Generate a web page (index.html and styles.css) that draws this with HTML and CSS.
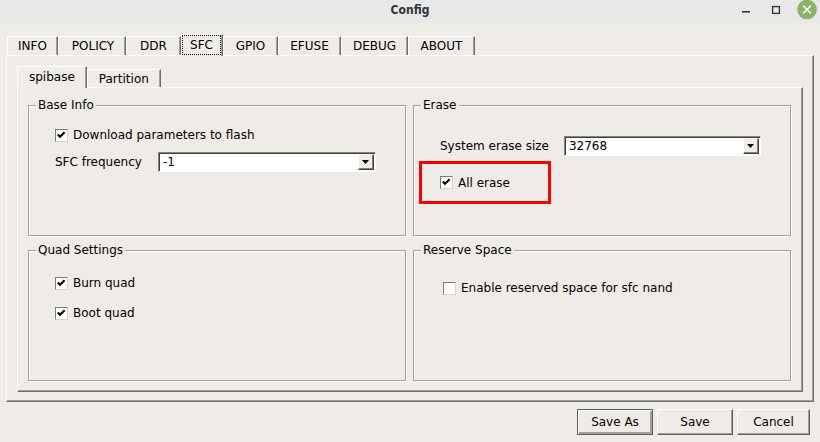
FILE: index.html
```html
<!DOCTYPE html>
<html lang="en">
<head>
<meta charset="utf-8">
<title>Config</title>
<link rel="stylesheet" href="styles.css">
</head>
<body>
<div class="window">
  <header class="titlebar">
    <span class="title">Config</span>
    <svg class="wm" width="78" height="23" viewBox="0 0 78 23" aria-hidden="true">
      <rect x="0" y="11" width="8" height="1.5" fill="#2e2e2e"/>
      <rect x="30.6" y="6.6" width="6.8" height="6.8" fill="none" stroke="#2e2e2e" stroke-width="1.3"/>
      <circle cx="65" cy="9.5" r="9.8" fill="#8cb369"/>
      <path d="M61.3 5.8 L68.7 13.2 M68.7 5.8 L61.3 13.2" stroke="#fff" stroke-width="1.4" fill="none"/>
    </svg>
  </header>

  <main class="content">
    <div class="tabs outer">
      <div class="tabbar">
        <span class="tab t-info">INFO</span>
        <span class="tab t-policy">POLICY</span>
        <span class="tab t-ddr">DDR</span>
        <span class="tab sel t-sfc"><span class="focus">SFC</span></span>
        <span class="tab t-gpio">GPIO</span>
        <span class="tab t-efuse">EFUSE</span>
        <span class="tab t-debug">DEBUG</span>
        <span class="tab t-about">ABOUT</span>
      </div>
      <div class="pane outer-pane">
        <div class="tabs inner">
          <div class="tabbar">
            <span class="tab sel">spibase</span>
            <span class="tab">Partition</span>
          </div>
          <div class="pane inner-pane">
            <div class="groups">
              <fieldset class="group">
                <legend>Base Info</legend>
                <div class="gbody base">
                  <label class="row check">
                    <span class="cb on"><svg width="11" height="11" viewBox="0 0 11 11"><polyline points="1.8,4.6 4,6.8 8.6,2.2" fill="none" stroke="#000" stroke-width="2.1"/></svg></span>
                    <span>Download parameters to flash</span>
                  </label>
                  <div class="row field">
                    <span>SFC frequency</span>
                    <div class="combo combo-freq"><span class="val">-1</span><span class="drop"><svg width="7" height="4" viewBox="0 0 7 4"><polygon points="0,0 7,0 3.5,4" fill="#000"/></svg></span></div>
                  </div>
                </div>
              </fieldset>

              <fieldset class="group">
                <legend>Erase</legend>
                <div class="gbody erase">
                  <div class="row field indent">
                    <span>System erase size</span>
                    <div class="combo combo-size"><span class="val">32768</span><span class="drop"><svg width="7" height="4" viewBox="0 0 7 4"><polygon points="0,0 7,0 3.5,4" fill="#000"/></svg></span></div>
                  </div>
                  <div class="highlight">
                    <label class="row check">
                      <span class="cb on"><svg width="11" height="11" viewBox="0 0 11 11"><polyline points="1.8,4.6 4,6.8 8.6,2.2" fill="none" stroke="#000" stroke-width="2.1"/></svg></span>
                      <span>All erase</span>
                    </label>
                  </div>
                </div>
              </fieldset>

              <fieldset class="group">
                <legend>Quad Settings</legend>
                <div class="gbody quad">
                  <label class="row check">
                    <span class="cb on"><svg width="11" height="11" viewBox="0 0 11 11"><polyline points="1.8,4.6 4,6.8 8.6,2.2" fill="none" stroke="#000" stroke-width="2.1"/></svg></span>
                    <span>Burn quad</span>
                  </label>
                  <label class="row check">
                    <span class="cb on"><svg width="11" height="11" viewBox="0 0 11 11"><polyline points="1.8,4.6 4,6.8 8.6,2.2" fill="none" stroke="#000" stroke-width="2.1"/></svg></span>
                    <span>Boot quad</span>
                  </label>
                </div>
              </fieldset>

              <fieldset class="group">
                <legend>Reserve Space</legend>
                <div class="gbody reserve">
                  <label class="row check">
                    <span class="cb"></span>
                    <span>Enable reserved space for sfc nand</span>
                  </label>
                </div>
              </fieldset>
            </div>
          </div>
        </div>
      </div>
    </div>

    <div class="buttons">
      <button class="btn default save-as">Save As</button>
      <button class="btn save">Save</button>
      <button class="btn cancel">Cancel</button>
    </div>
  </main>
</div>
</body>
</html>
```

FILE: styles.css
```css
* { box-sizing: border-box; }

html, body {
  margin: 0;
  padding: 0;
}

body {
  width: 820px;
  height: 442px;
  overflow: hidden;
  background: #efebe7;
  color: #000;
  font-family: "DejaVu Sans", "Liberation Sans", sans-serif;
  font-size: 12px;
  line-height: 1;
}

.window {
  display: flex;
  flex-direction: column;
  height: 442px;
}

/* ---------- title bar ---------- */
.titlebar {
  height: 23px;
  flex: none;
  background: #e8e8e8;
  display: grid;
  grid-template-columns: 1fr auto 1fr;
  align-items: center;
}

.title {
  grid-column: 2;
  font-family: "DejaVu Sans Condensed", "DejaVu Sans", sans-serif;
  font-stretch: condensed;
  font-weight: bold;
  font-size: 12px;
  color: #2e3436;
  padding-bottom: 3px;
}

.wm {
  grid-column: 3;
  justify-self: end;
  display: block;
}

/* ---------- content ---------- */
.content {
  flex: 1;
  display: flex;
  flex-direction: column;
  padding: 11px 6px 0 6px;
}

.tabs {
  display: flex;
  flex-direction: column;
}

.tabs.outer {
  height: 368px;
  flex: none;
}

.tabs.inner {
  flex: 1;
}

.tabbar {
  display: flex;
  align-items: flex-end;
  height: 21px;
  flex: none;
  position: relative;
  z-index: 1;
}

.outer > .tabbar {
  padding-left: 1px;
}

.tab {
  height: 19px;
  padding: 0 11px;
  display: flex;
  align-items: center;
  justify-content: center;
  white-space: nowrap;
  background: #efebe7;
  border-top: 1px solid #fff;
  border-left: 1px solid #fff;
  border-right: 1px solid #6f6f6f;
  box-shadow: inset -1px 0 0 #a0a0a0;
}

/* tab widths as laid out by the toolkit */
.t-info   { width: 51px; padding: 0; }
.t-policy { width: 68px; padding: 0 0 0 2px; }
.t-ddr    { width: 55px; padding: 0; }
.t-sfc    { width: 42px; }
.t-gpio   { width: 55px; padding: 0; }
.t-efuse  { width: 63px; padding: 0; }
.t-debug  { width: 67px; padding: 0; }
.t-about  { width: 67px; padding: 0; }

.inner .tab {
  height: 18px;
}

.tab.sel,
.inner .tab.sel {
  height: 22px;
  margin-bottom: -1px;
  padding-bottom: 1px;
}

.outer > .tabbar > .tab.sel {
  padding: 0 1px 1px 0;
  align-items: flex-start;
}

.focus {
  display: flex;
  align-items: center;
  justify-content: center;
  width: 40px;
  height: 20px;
  border: 1px dotted #000;
}

.pane {
  flex: 1;
  display: flex;
  flex-direction: column;
  background: #efebe7;
  border-top: 1px solid #fff;
  border-left: 1px solid #fff;
  border-right: 1px solid #6f6f6f;
  border-bottom: 1px solid #6f6f6f;
  box-shadow: inset -1px -1px 0 #a0a0a0;
}

.outer-pane {
  padding: 10px 10px 9px 10px;
}

/* ---------- group boxes ---------- */
.groups {
  flex: 1;
  display: grid;
  grid-template-columns: 1fr 1fr;
  grid-template-rows: 1fr 1fr;
  gap: 6px 7px;
  padding: 9px 11px 10px 10px;
}

.group {
  margin: 0;
  padding: 0;
  min-width: 0;
  border: 1px solid #a0a0a0;
  box-shadow: 1px 1px 0 #fff, inset 1px 1px 0 #fff;
}

.group legend {
  margin-left: 7px;
  padding: 0 2px;
  line-height: 16px;
  background: #efebe7;
}

.gbody {
  display: flex;
  flex-direction: column;
}

.gbody.base { padding: 12px 0 0 26px; gap: 7px; }
.gbody.erase { padding: 23px 0 0 5px; gap: 5px; }
.gbody.quad { padding: 15px 0 0 26px; gap: 10px; }
.gbody.reserve { padding: 20px 0 0 29px; }

.row {
  display: flex;
  align-items: center;
  height: 20px;
  white-space: nowrap;
}

.check { gap: 5px; }
.field { gap: 15px; }
.indent { margin-left: 21px; }

.cb {
  width: 13px;
  height: 13px;
  flex: none;
  background: #fff;
  border: 1px solid;
  border-color: #7c7c7c #d4d4d4 #d4d4d4 #7c7c7c;
  display: flex;
}

.cb svg { display: block; }

.highlight {
  width: 132px;
  height: 43px;
  border: 3px solid #ff0000;
  padding-left: 18px;
  display: flex;
  align-items: center;
}

/* ---------- combo box ---------- */
.combo {
  height: 20px;
  display: flex;
  align-items: center;
  background: #fff;
  border: 1px solid;
  border-color: #848484 #fff #fff #848484;
  box-shadow: inset 1px 1px 0 #404040;
  padding: 1px 1px 1px 4px;
}

.combo-freq { width: 218px; margin-left: 1px; }
.combo-size { width: 197px; }

.val { flex: 1; }

.drop {
  width: 16px;
  height: 16px;
  flex: none;
  display: flex;
  align-items: center;
  justify-content: center;
  background: #efebe7;
  border: 1px solid;
  border-color: #fff #404040 #404040 #fff;
  box-shadow: inset -1px -1px 0 #808080;
}

.drop svg { display: block; }

/* ---------- buttons ---------- */
.buttons {
  display: flex;
  justify-content: flex-end;
  gap: 4px;
  margin-top: 7px;
  padding-right: 4px;
}

.btn {
  height: 26px;
  margin: 0;
  padding: 0;
  font: inherit;
  color: #000;
  background: #efebe7;
  border: 1px solid;
  border-color: #fff #5e5e5e #5e5e5e #fff;
  box-shadow: inset -1px -1px 0 #a0a0a0;
}

.btn.default {
  border-color: #5e5e5e;
  box-shadow: inset 1px 1px 0 #fff, inset -2px -2px 0 #a0a0a0;
}

.save-as { width: 76px; }
.save { width: 76px; }
.cancel { width: 73px; }
```
